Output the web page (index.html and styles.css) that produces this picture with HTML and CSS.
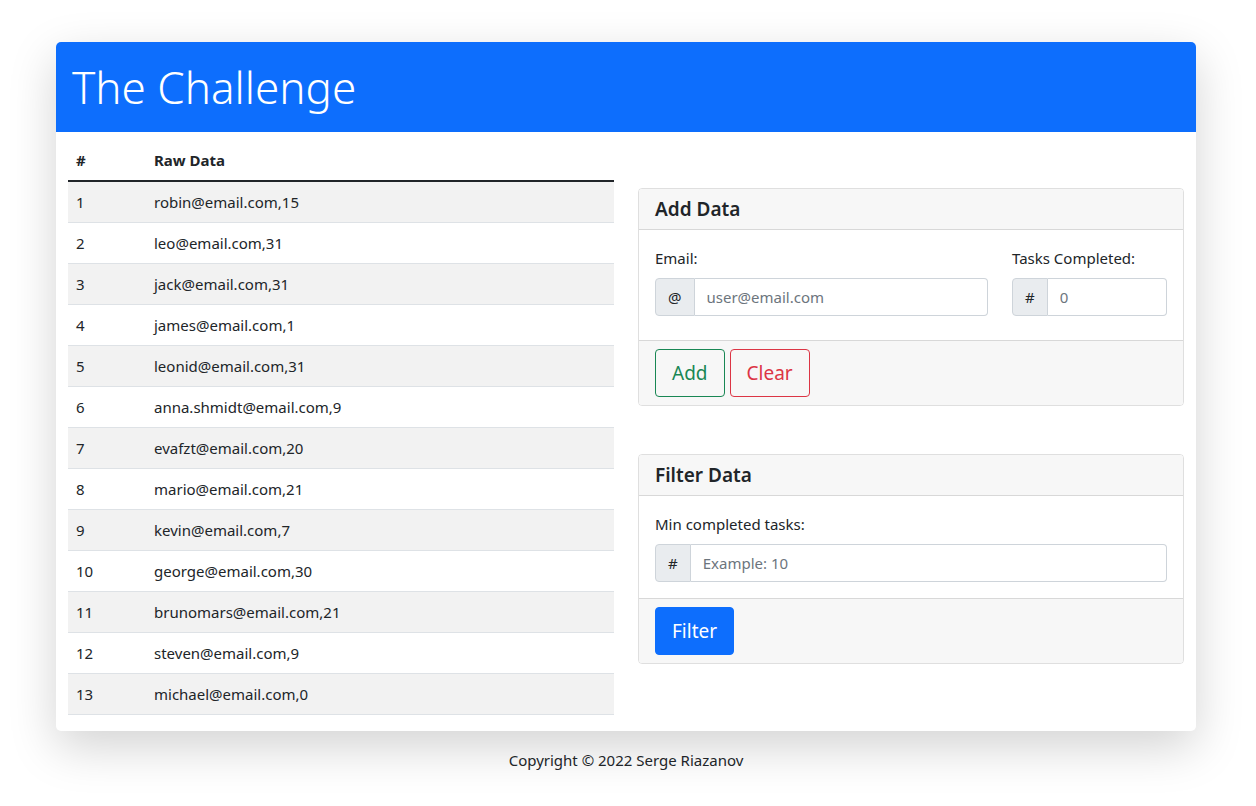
FILE: index.html
```html
<!DOCTYPE html>
<html lang="en">
<head>
<meta charset="utf-8">
<title>The Challenge</title>
<link rel="stylesheet" href="styles.css">
</head>
<body>
<div class="page">
  <div class="main-card">
    <header class="hero"><h1 class="title">The Challenge</h1></header>
    <div class="row">
      <div class="col">
        <table class="table">
          <colgroup><col class="c-num"><col></colgroup>
          <thead>
            <tr><th>#</th><th>Raw Data</th></tr>
          </thead>
          <tbody>
            <tr><td>1</td><td>robin@email.com,15</td></tr>
            <tr><td>2</td><td>leo@email.com,31</td></tr>
            <tr><td>3</td><td>jack@email.com,31</td></tr>
            <tr><td>4</td><td>james@email.com,1</td></tr>
            <tr><td>5</td><td>leonid@email.com,31</td></tr>
            <tr><td>6</td><td>anna.shmidt@email.com,9</td></tr>
            <tr><td>7</td><td>evafzt@email.com,20</td></tr>
            <tr><td>8</td><td>mario@email.com,21</td></tr>
            <tr><td>9</td><td>kevin@email.com,7</td></tr>
            <tr><td>10</td><td>george@email.com,30</td></tr>
            <tr><td>11</td><td>brunomars@email.com,21</td></tr>
            <tr><td>12</td><td>steven@email.com,9</td></tr>
            <tr><td>13</td><td>michael@email.com,0</td></tr>
          </tbody>
        </table>
      </div>
      <div class="col">
        <section class="card">
          <div class="card-header">Add Data</div>
          <div class="card-body add-body">
            <div class="field-row">
              <div class="field field-wide">
                <label class="label">Email:</label>
                <div class="input-group">
                  <span class="addon">@</span>
                  <input class="input" type="text" placeholder="user@email.com">
                </div>
              </div>
              <div class="field field-narrow">
                <label class="label">Tasks Completed:</label>
                <div class="input-group">
                  <span class="addon">#</span>
                  <input class="input" type="text" placeholder="0">
                </div>
              </div>
            </div>
          </div>
          <div class="card-footer">
            <button class="btn btn-outline-success">Add</button>
            <button class="btn btn-outline-danger">Clear</button>
          </div>
        </section>
        <section class="card">
          <div class="card-header">Filter Data</div>
          <div class="card-body">
            <label class="label">Min completed tasks:</label>
            <div class="input-group">
              <span class="addon">#</span>
              <input class="input" type="text" placeholder="Example: 10">
            </div>
          </div>
          <div class="card-footer">
            <button class="btn btn-primary">Filter</button>
          </div>
        </section>
      </div>
    </div>
  </div>
  <footer class="footer">Copyright © 2022 Serge Riazanov</footer>
</div>
</body>
</html>
```

FILE: styles.css
```css
* { box-sizing: border-box; }
html, body { margin: 0; padding: 0; background: #fff; }
body {
  font-family: "Noto Sans", "Open Sans", sans-serif;
  font-size: 16px;
  line-height: 1.5;
  color: #212529;
  min-height: 806px;
}
.page {
  width: 1140px;
  margin: 42px 0 0 56px;
  padding-bottom: 40px;
}
.main-card {
  background: #fff;
  border-radius: 5px;
  box-shadow: 0 16px 48px rgba(0, 0, 0, 0.175);
  overflow: hidden;
}
.hero {
  background: #0d6efd;
  padding: 16px 16px;
}
.title {
  margin: 0;
  font-size: 44px;
  font-weight: 300;
  line-height: 58px;
  color: #fff;
}
.row {
  display: flex;
}
.col {
  width: 50%;
  padding: 8px 12px 0;
}
.table {
  width: 100%;
  border-collapse: collapse;
  table-layout: fixed;
  margin-bottom: 16px;
}
.c-num { width: 78px; }
.table th, .table td {
  text-align: left;
  padding: 8px;
  border-bottom: 1px solid #dee2e6;
  vertical-align: top;
  font-size: 15px;
  line-height: 24px;
}
.table th {
  font-weight: 700;
  border-bottom: 2px solid #212529;
}
.table tbody tr:nth-child(odd) td { background: #f2f2f2; }

.card {
  margin-top: 48px;
  border: 1px solid rgba(0, 0, 0, 0.125);
  border-radius: 4px;
  overflow: hidden;
}
.card-header {
  background: #f7f7f7;
  border-bottom: 1px solid rgba(0, 0, 0, 0.125);
  padding: 8px 16px;
  font-size: 19px;
  font-weight: 600;
  line-height: 24px;
}
.card-body { padding: 16px; }
.add-body { padding-bottom: 24px; }
.card-footer {
  background: #f7f7f7;
  border-top: 1px solid rgba(0, 0, 0, 0.125);
  padding: 8px 16px;
  display: flex;
  gap: 5px;
}
.field-row { display: flex; gap: 24px; }
.field-wide { flex: 0 0 333px; min-width: 0; }
.field-narrow { flex: 1 1 0; min-width: 0; }
.label {
  display: block;
  margin-bottom: 8px;
  font-size: 15px;
  line-height: 24px;
}
.input-group {
  display: flex;
  height: 38px;
}
.addon {
  display: flex;
  align-items: center;
  padding: 0 12px;
  background: #e9ecef;
  border: 1px solid #ced4da;
  border-radius: 4px 0 0 4px;
  font-size: 15px;
}
.input {
  flex: 1 1 auto;
  min-width: 0;
  width: 100%;
  border: 1px solid #ced4da;
  border-left: none;
  border-radius: 0 4px 4px 0;
  padding: 0 12px;
  font-family: inherit;
  font-size: 15px;
  color: #212529;
  background: #fff;
  outline: none;
}
.input::placeholder { color: #6c757d; }
.btn {
  font-family: inherit;
  font-size: 19px;
  line-height: 30px;
  padding: 8px 16px;
  border-radius: 4px;
  border: 1px solid transparent;
  background: transparent;
  cursor: pointer;
}
.btn-outline-success { color: #198754; border-color: #198754; }
.btn-outline-danger { color: #dc3545; border-color: #dc3545; }
.btn-primary { color: #fff; background: #0d6efd; border-color: #0d6efd; }
.footer {
  text-align: center;
  padding-top: 18px;
  font-size: 15px;
}
```
